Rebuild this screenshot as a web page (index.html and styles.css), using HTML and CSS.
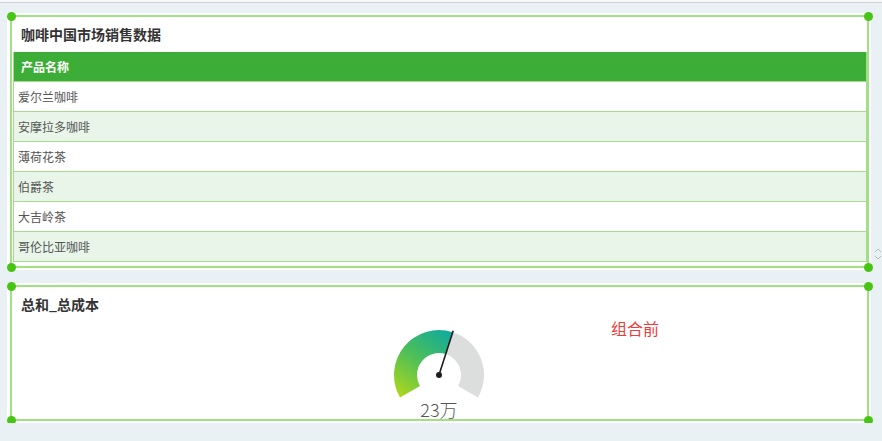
FILE: index.html
```html
<!DOCTYPE html>
<html lang="zh-CN">
<head>
  <meta charset="UTF-8" />
  <title>咖啡中国市场销售数据</title>
  <link rel="stylesheet" href="styles.css">
</head>
<body>
<div class="topbar"></div>

<div class="panel panel-table">
  <h3 class="panel-title">咖啡中国市场销售数据</h3>
  <div class="table">
    <div class="row head">产品名称</div>
    <div class="row">爱尔兰咖啡</div>
    <div class="row alt">安摩拉多咖啡</div>
    <div class="row">薄荷花茶</div>
    <div class="row alt">伯爵茶</div>
    <div class="row">大吉岭茶</div>
    <div class="row alt">哥伦比亚咖啡</div>
  </div>
  <svg class="scroll-arrows" width="8" height="14" viewBox="0 0 8 14">
    <path d="M1 5 L4 2 L7 5" fill="none" stroke="#b9bdc0" stroke-width="1"/>
    <path d="M1 9 L4 12 L7 9" fill="none" stroke="#b9bdc0" stroke-width="1"/>
  </svg>
  <div class="sel">
    <span class="dot tl"></span><span class="dot tr"></span>
    <span class="dot bl"></span><span class="dot br"></span>
  </div>
</div>

<div class="panel panel-gauge">
  <h3 class="panel-title">总和_总成本</h3>
  <div class="gauge">
    <svg width="100" height="75" viewBox="0 0 100 75">
      <defs>
        <linearGradient id="gaugeFill" gradientUnits="userSpaceOnUse" x1="14" y1="72" x2="60" y2="6">
          <stop offset="0" stop-color="#a9d61e"/>
          <stop offset="0.5" stop-color="#4cbf58"/>
          <stop offset="1" stop-color="#10aa9e"/>
        </linearGradient>
      </defs>
      <!-- value part, 210deg down to the needle -->
      <path d="M11.03 72.5 A45 45 0 0 1 63.76 7.16 L56.73 29.06 A22 22 0 0 0 30.95 61 Z" fill="url(#gaugeFill)"/>
      <!-- rest of the track -->
      <path d="M63.76 7.16 A45 45 0 0 1 88.97 72.5 L69.05 61 A22 22 0 0 0 56.73 29.06 Z" fill="#dcdddd"/>
      <line x1="50" y1="50" x2="64.2" y2="5.8" stroke="#1e1e1e" stroke-width="1.6"/>
      <circle cx="50" cy="50" r="3" fill="#1e1e1e"/>
    </svg>
    <div class="gauge-value">23万</div>
  </div>
  <div class="note">组合前</div>
  <div class="sel">
    <span class="dot tl"></span><span class="dot tr"></span>
    <span class="dot bl"></span><span class="dot br"></span>
  </div>
</div>
</body>
</html>
```

FILE: styles.css
```css
body {
  margin: 0;
  background: #eaf1f5;
  font-family: "Noto Sans CJK SC", "Liberation Sans", sans-serif;
}
.topbar {
  height: 2px;
  background: #f6f8f9;
  border-bottom: 1px solid #cfd3d6;
}
.panel {
  position: relative;
  width: 864px;
  margin-left: 7px;
  background: #fff;
  box-sizing: border-box;
}
.panel-table {
  margin-top: 10px;
  height: 257px;
}
.panel-gauge {
  margin-top: 13px;
  height: 140px;
}
.panel-title {
  margin: 0;
  padding: 11px 14px 8px;
  font-size: 14px;
  line-height: 20px;
  font-weight: bold;
  color: #333;
}
.table {
  margin: 0 4px 0 6px;
  border-left: 1px solid #a6da8c;
  border-right: 1px solid #a6da8c;
}
.row {
  height: 30px;
  box-sizing: border-box;
  border-bottom: 1px solid #a6da8c;
  padding-left: 4px;
  font-size: 12px;
  line-height: 29px;
  color: #555;
  background: #fff;
}
.row.alt {
  background: #e8f5e8;
}
.row.head {
  background: #3cad36;
  color: #fff;
  font-weight: bold;
  padding-left: 7px;
}
.scroll-arrows {
  position: absolute;
  right: -11px;
  top: 234px;
}

/* selection frame drawn over the widget */
.sel {
  position: absolute;
  top: 2px;
  left: 3px;
  right: 2px;
  bottom: 2px;
  border: 2px solid #a1e185;
  pointer-events: none;
}
.dot {
  position: absolute;
  width: 9px;
  height: 9px;
  border-radius: 50%;
  background: #47c414;
}
.dot.tl { top: -5.5px; left: -5.5px; }
.dot.tr { top: -5.5px; right: -5.5px; }
.dot.bl { bottom: -5.5px; left: -5.5px; }
.dot.br { bottom: -5.5px; right: -5.5px; }

.gauge {
  width: 100px;
  margin: 3px auto 0;
  text-align: center;
}
.gauge svg {
  display: block;
}
.gauge-value {
  font-size: 18px;
  line-height: 20px;
  color: #555;
  font-weight: 300;
  margin-top: -1px;
}
.note {
  position: absolute;
  left: 604px;
  top: 34px;
  font-size: 16px;
  line-height: 22px;
  color: #ee3b3b;
}
```
